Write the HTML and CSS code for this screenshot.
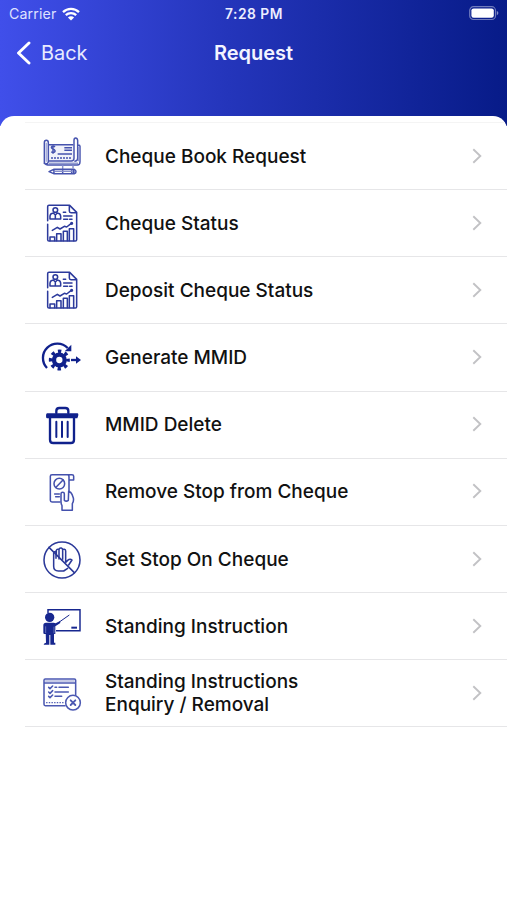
FILE: index.html
```html
<!DOCTYPE html>
<html lang="en">
<head>
<meta charset="utf-8">
<title>Request</title>
<link rel="stylesheet" href="styles.css">
</head>
<body>
<div class="screen">
  <header class="header">
    <div class="status">
      <div class="carrier"><span>Carrier</span>
        <svg class="wifi" viewBox="0 0 18 14"><path d="M1 5.2A11.5 11.5 0 0 1 17 5.2M3.8 8.2A7.6 7.6 0 0 1 14.2 8.2" fill="none" stroke="#fff" stroke-width="2.3"/><path d="M9 13.6 5.9 10.5A4.4 4.4 0 0 1 12.1 10.5Z" fill="#fff"/></svg>
      </div>
      <div class="time">7:28 PM</div>
      <div class="power">
        <svg class="battery" viewBox="0 0 30 15"><rect x=".7" y=".7" width="25.8" height="12.8" rx="3.8" fill="none" stroke="#fff" stroke-opacity=".42" stroke-width="1.2"/><rect x="2.4" y="2.4" width="22.4" height="9.4" rx="2.2" fill="#fff"/><path d="M27.8 5v4.2q1.6-.6 1.6-2.1T27.8 5Z" fill="#fff" fill-opacity=".5"/></svg>
      </div>
    </div>
    <nav class="nav">
      <a class="back"><svg class="back-arrow" viewBox="0 0 16 24"><path d="M13 2 2.5 12 13 22" fill="none" stroke="#fff" stroke-width="2.9" stroke-linecap="round" stroke-linejoin="round"/></svg><span>Back</span></a>
      <h1 class="title">Request</h1>
      <span></span>
    </nav>
  </header>
  <svg class="defs">
    <symbol id="chevron" viewBox="0 0 10 16"><path d="M1.3 1.3 8.3 8l-7 6.7" fill="none" stroke="#c2c2c5" stroke-width="1.9"/></symbol>
    <symbol id="report" viewBox="0 0 192 192">
      <g fill="none" stroke="#2c3a9c" stroke-width="4.6" stroke-linejoin="round" stroke-linecap="round">
        <path d="M53 85V43q0-4 4-4h62l21 21v82q0 4-4 4H57q-4 0-4-4V96M118 40v16q0 5 5 5h16"/>
        <circle cx="76" cy="53" r="7"/><path d="M60 80V71q1-8 10-9l6 6 6-6q9 1 10 9v9ZM76 68v10M100 60h7M101 71h25M101 81h12M119 81h7"/>
        <path d="m67 114 15-9 8 5 13-8 7 2 13-10"/><circle cx="125" cy="93" r="2.5" fill="#2c3a9c"/>
        <path d="M60 145v-11h14v11M80 145v-21h13v21M100 145v-28h12v28M118 145v-36h13v36"/>
      </g>
    </symbol>
  </svg>
  <main class="sheet">
    <ul class="list">
      <li class="row">
        <svg class="icon" viewBox="0 -1 192 192"><g fill="none" stroke="#4653ae" stroke-width="4.4" stroke-linejoin="round">
          <path d="M55 107h69q8 0 8-8V57H55Z" fill="#f1f2fa" stroke="none"/>
          <path d="M55 58h75"/>
          <path d="M43 116V52q0-7 6-7t6 7v7M43 108q0 11 10 11h89q8 0 8-10V63q0-4-5-4M55 59v48q0 10-10 9M55 107h69q8 0 8-8V45q0-7 5-7t6 7v54q0 9-10 9"/>
          <path d="M49 52v57" stroke="#a9b0db" stroke-width="5"/><path d="M57 114h87M146 65v43" stroke="#929bd0"/>
          <path d="M75 65q-4-4-9-2-4 4 1 7l6 3q5 5-1 8-5 2-8-2M69 60v25"/>
          <path d="M103 67h23M103 75h23M83 86h43"/><path d="M63 98h63" stroke-dasharray="6 3"/>
          <path d="M98 120v11M129 120v9" stroke="#8790cb"/><path d="m57 139 14-7h62q5 2 5 7t-5 6H71ZM72 132v13M98 132v13M125 132v13"/><path d="M75 138h51" stroke="#8790cb"/><path d="M131 133v11" stroke-width="6"/>
        </g></svg>
        <span class="label">Cheque Book Request</span><svg class="chev"><use href="#chevron"/></svg></li>
      <li class="row"><svg class="icon" viewBox="0 -1 192 192"><use href="#report"/></svg><span class="label">Cheque Status</span><svg class="chev"><use href="#chevron"/></svg></li>
      <li class="row"><svg class="icon" viewBox="0 -1 192 192"><use href="#report"/></svg><span class="label">Deposit Cheque Status</span><svg class="chev"><use href="#chevron"/></svg></li>
      <li class="row">
        <svg class="icon" viewBox="0 0 192 192"><g fill="none" stroke="#10218c">
          <path d="M51 126A42 42 0 0 1 113 66" stroke-width="7"/><path d="M124 56v20h-20Z" fill="#10218c" stroke="none"/>
          <circle cx="88" cy="102" r="16" stroke-width="13"/><circle cx="88" cy="102" r="26" stroke-width="11" stroke-dasharray="10 10.42" stroke-dashoffset="5"/>
          <path d="M123 102h18" stroke-width="7"/><path d="m138 91 15 11-15 11Z" fill="#10218c" stroke="none"/>
        </g></svg>
        <span class="label">Generate MMID</span><svg class="chev"><use href="#chevron"/></svg></li>
      <li class="row">
        <svg class="icon" viewBox="0 0 192 192"><g fill="none" stroke="#10218c" stroke-linecap="round">
          <path d="M79 57v-6q0-9 9-9h18q9 0 9 9v6" stroke-width="7"/><path d="M51 58h91q3 0 3 4t-3 11H51q-3 0-3-7t3-8Z" fill="#10218c" stroke="none"/>
          <path d="M60 72v65q0 10 10 10h52q10 0 10-10V72" stroke-width="7"/><path d="M79 83v46M96 83v46M113 83v46" stroke-width="6"/>
        </g></svg>
        <span class="label">MMID Delete</span><svg class="chev"><use href="#chevron"/></svg></li>
      <li class="row">
        <svg class="icon" viewBox="0 0 192 192"><g fill="none" stroke="#4451ad" stroke-width="4.6" stroke-linejoin="round" stroke-linecap="round">
          <path d="M90 123H66q-5 0-5-5V46q0-5 5-5h60q5 0 5 5v11h-14V47q0-6-5-6M117 57v36"/>
          <circle cx="88" cy="68" r="16"/><path d="m78 79 21-22M74 99h14M77 107h11"/>
          <path d="M96 148v-14q-3-5-3-12V98q0-4 5-4t5 4v20q6 5 12 0l1-27q7 2 10 9l4 11q2 9-3 17v20Z"/>
        </g></svg>
        <span class="label">Remove Stop from Cheque</span><svg class="chev"><use href="#chevron"/></svg></li>
      <li class="row">
        <svg class="icon" viewBox="0 0 192 192"><g fill="none" stroke="#2b3999" stroke-width="4.6" stroke-linejoin="round" stroke-linecap="round">
          <circle cx="96" cy="96" r="54"/><path d="m57 58 76 76"/>
          <path d="M71 74v41q0 14 14 14h16l12-8M71 76q1-6 7-5v20M79 84V68q1-6 8-4v29M87 66q0-7 7-6 4 1 4 6v28M98 67q0-4 5-3 4 1 4 5v34l6-6q7-6 13-1l-10 15"/>
        </g></svg>
        <span class="label">Set Stop On Cheque</span><svg class="chev"><use href="#chevron"/></svg></li>
      <li class="row">
        <svg class="icon" viewBox="0 0 192 192"><g fill="none" stroke="#17278f">
          <path d="M54 54V44h96v63H78" stroke-width="4.4"/><path d="M124 98h17" stroke-width="6"/>
          <circle cx="59" cy="67" r="14" fill="#17278f" stroke="none"/>
          <path d="m77 85 13-7 1 6-15 10v23H43q-3 0-3-4V91q0-8 8-8h23Z" fill="#17278f" stroke="none"/><path d="m88 81 30-21" stroke-width="3"/>
          <path d="M47 110h25v33h4v6H61v-29h-3v29H41q0-5 7-6Z" fill="#17278f" stroke="none"/><path d="M47 94v20M72 95v20" stroke="#dfe2f5" stroke-width="1.2"/>
        </g></svg>
        <span class="label">Standing Instruction</span><svg class="chev"><use href="#chevron"/></svg></li>
      <li class="row">
        <svg class="icon" viewBox="0 1 192 192"><g fill="none" stroke="#4b58b2" stroke-width="4.6" stroke-linecap="round" stroke-linejoin="round">
          <path d="M105 132H46q-4 0-4-4V56q0-4 4-4h87q4 0 4 4v43M43 64h93"/><path d="M47 58h85" stroke="#b5bbdf" stroke-width="5"/>
          <path d="m56 77 4 4 8-8M56 91l4 4 8-8M56 104l4 4 8-8M75 77h5M87 77h28M75 91h40M75 104h20"/>
          <path d="M50 123h53" stroke-width="4" stroke-dasharray="1 7"/><circle cx="129" cy="123" r="22"/><path d="m122 116 14 14m0-14-14 14" stroke-width="5.5"/>
        </g></svg>
        <span class="label">Standing Instructions<br>Enquiry / Removal</span><svg class="chev"><use href="#chevron"/></svg></li>
    </ul>
  </main>
</div>
</body>
</html>
```
FILE: styles.css
```css
* { box-sizing: border-box; }
body { margin: 0; font-family: Inter, "Liberation Sans", sans-serif; background: #fff; }
.screen { height: 900px; overflow: hidden; background: #fff; }
.header { height: 126px; color: #fff; background: linear-gradient(90deg, #404fea 0%, #2435bb 45%, #071b88 100%); }
.status { height: 27px; display: grid; grid-template-columns: 1fr auto 1fr; align-items: center; padding: 0 8px 0 9px; font-size: 14px; }
.carrier { display: flex; align-items: center; gap: 6px; font-size: 14.2px; letter-spacing: 0.12px; color: #dfe2ff; }
.wifi { width: 18px; height: 14px; }
.time { font-weight: 600; font-size: 13.8px; letter-spacing: 0.5px; color: #eceeff; }
.power { display: flex; justify-content: flex-end; }
.battery { width: 30px; height: 15px; }
.nav { height: 51px; display: grid; grid-template-columns: 1fr auto 1fr; align-items: center; padding: 0 16px; }
.back { display: flex; align-items: center; gap: 9px; font-size: 19.9px; color: #e9ebff; }
.back-arrow { width: 16px; height: 24px; }
.title { margin: 0; font-size: 20px; font-weight: 600; color: #f3f4ff; }
.defs { display: none; }
.sheet { margin-top: -10.5px; height: 784.5px; background: #fff; border-radius: 14px 14px 0 0; padding-top: 6.5px; overflow: hidden; }
.list { list-style: none; margin: 0 0 0 25px; padding: 0; border-top: 1px solid #f4f4f4; }
.row { height: 67.17px; display: flex; align-items: center; padding: 0 25px 0 5px; border-bottom: 1px solid #e6e6e8; }
.icon { width: 64px; height: 64px; margin-top: 2px; align-self: flex-start; flex: none; }
.label { flex: 1; margin-left: 11px; font-size: 19px; line-height: 23px; font-weight: 500; color: #111; white-space: nowrap; }
.chev { width: 10px; height: 16px; flex: none; margin-bottom: 1px; }
```
